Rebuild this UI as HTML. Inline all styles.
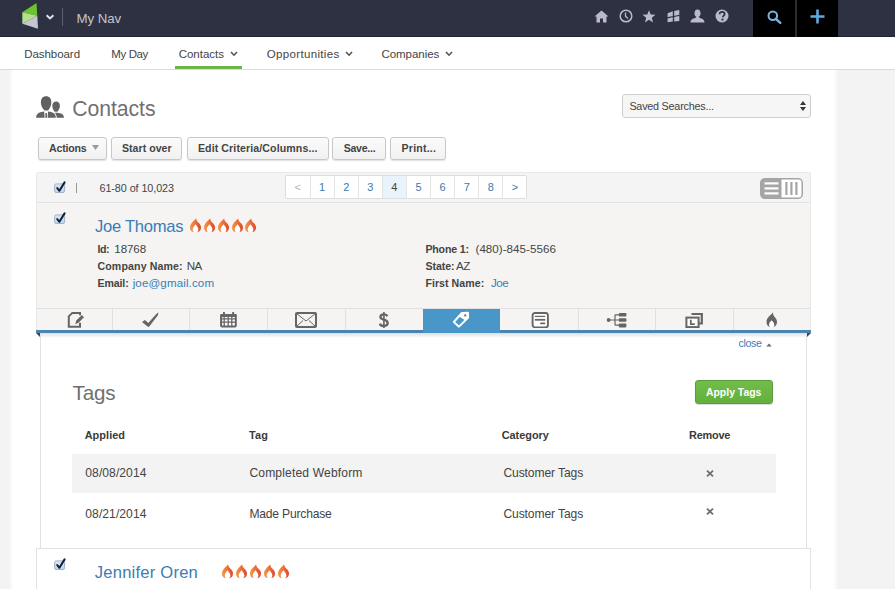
<!DOCTYPE html>
<html><head><meta charset="utf-8">
<style>
*{box-sizing:border-box;margin:0;padding:0}
html,body{width:895px;height:589px;overflow:hidden;background:#f3f3f3;font-family:"Liberation Sans",sans-serif;color:#444}
.abs{position:absolute}
#top{position:absolute;left:0;top:0;width:895px;height:37px;background:#2e3142;border-bottom:1px solid #242633}
#nav2{position:absolute;left:0;top:37px;width:895px;height:33px;background:#fff;border-bottom:1px solid #dcdcdc}
.tab2{position:absolute;top:11px;font-size:13px;color:#444;white-space:nowrap}
.chev{display:inline-block;width:5px;height:5px;border-right:1.5px solid #555;border-bottom:1.5px solid #555;transform:rotate(45deg);margin-left:7px;position:relative;top:-3px}
#main{position:absolute;left:10px;top:70px;width:828px;height:519px;background:#fff}
.btn{position:absolute;top:137px;height:23px;border:1px solid #c8c8c8;border-radius:3px;background:linear-gradient(#fbfbfb,#f1f1f1);box-shadow:0 1px 1px rgba(0,0,0,.12);font-size:11px;font-weight:bold;color:#444;text-align:center;line-height:21px;white-space:nowrap}
.txt{position:absolute;white-space:nowrap}
</style></head><body>
<div id="top">
  <svg class="abs" style="left:0;top:0" width="45" height="36" viewBox="0 0 45 36">
    <polygon points="22.3,12.2 36.5,3 37.3,15.8" fill="#6ac42e"/>
    <polygon points="22.3,12.2 37.3,15.8 22.3,23.8" fill="#b3e08e"/>
    <polygon points="22.3,23.8 37.3,15.8 38,28.7" fill="#c6c6ce"/>
  </svg>
  <svg class="abs" style="left:44px;top:12px" width="12" height="9" viewBox="0 0 12 9"><path d="M2.6 3.2 L6 6.4 L9.4 3.2" fill="none" stroke="#e4e5ea" stroke-width="1.9"/></svg>
  <div class="abs" style="left:62px;top:8px;width:1px;height:18px;background:#5a5d6c"></div>
</div>
<div id="nav2">
  <div class="abs" style="left:175px;top:29px;width:67px;height:3px;background:#6cb44a"></div>
</div>
<div id="main"></div><div class="abs" style="left:833px;top:70px;width:5px;height:519px;background:linear-gradient(to right,rgba(0,0,0,0),rgba(0,0,0,.045))"></div><div class="abs" style="left:10px;top:70px;width:3px;height:519px;background:linear-gradient(to left,rgba(0,0,0,0),rgba(0,0,0,.04))"></div>
<!-- Heading -->
<!-- Select -->
<div class="abs" style="left:622px;top:94px;width:189px;height:24px;border:1px solid #cfcfcf;border-radius:3px;background:#f6f6f6"></div>
<!-- buttons -->
<div class="btn" style="left:38px;width:69px"></div>
<div class="btn" style="left:111px;width:71px"></div>
<div class="btn" style="left:187px;width:142px"></div>
<div class="btn" style="left:332px;width:54px"></div>
<div class="btn" style="left:390px;width:56px"></div>

<!-- list container -->
<div class="abs" style="left:36px;top:172px;width:775px;height:161px;border:1px solid #e9e9e9;border-bottom:none;border-radius:3px 3px 0 0;background:#f5f4f2"></div>
<div class="abs" style="left:37px;top:173px;width:773px;height:30px;background:#f4f4f4;border-bottom:1px solid #e3e3e3;border-radius:3px 3px 0 0"></div>
<svg class="abs" style="left:53px;top:180px" width="14" height="14" viewBox="0 0 14 14"><defs><linearGradient id="cbg" x1="0" y1="0" x2="0" y2="1"><stop offset="0" stop-color="#dbe6f3"/><stop offset="1" stop-color="#bcd8ef"/></linearGradient></defs><rect x="1.6" y="3.9" width="10" height="8.6" rx="1.6" fill="url(#cbg)" stroke="#a3b3c6"/><path d="M4.2 8 L6.4 10.8 L11.6 2.4" fill="none" stroke="#131f3d" stroke-width="2" stroke-linecap="round" stroke-linejoin="round"/></svg>
<div class="abs" style="left:76px;top:183px;width:1px;height:10px;background:#999"></div>
<div class="abs" style="left:285px;top:175px;height:24px;border:1px solid #ddd;border-radius:2px;background:#fff;display:flex">
<div style="width:23.6px;height:22px;background:#fff;color:#b5b5b5;font-size:11px;text-align:center;line-height:22px">&lt;</div><div style="width:24.1px;height:22px;border-left:1px solid #e4e4e4;background:#fff;color:#4179ab;font-size:11px;text-align:center;line-height:22px">1</div><div style="width:24.1px;height:22px;border-left:1px solid #e4e4e4;background:#fff;color:#4179ab;font-size:11px;text-align:center;line-height:22px">2</div><div style="width:24.1px;height:22px;border-left:1px solid #e4e4e4;background:#fff;color:#4179ab;font-size:11px;text-align:center;line-height:22px">3</div><div style="width:24.1px;height:22px;border-left:1px solid #e4e4e4;background:#e9f3fb;color:#444;font-size:11px;text-align:center;line-height:22px">4</div><div style="width:24.1px;height:22px;border-left:1px solid #e4e4e4;background:#fff;color:#4179ab;font-size:11px;text-align:center;line-height:22px">5</div><div style="width:24.1px;height:22px;border-left:1px solid #e4e4e4;background:#fff;color:#4179ab;font-size:11px;text-align:center;line-height:22px">6</div><div style="width:24.1px;height:22px;border-left:1px solid #e4e4e4;background:#fff;color:#4179ab;font-size:11px;text-align:center;line-height:22px">7</div><div style="width:24.1px;height:22px;border-left:1px solid #e4e4e4;background:#fff;color:#4179ab;font-size:11px;text-align:center;line-height:22px">8</div><div style="width:24.1px;height:22px;border-left:1px solid #e4e4e4;background:#fff;color:#4179ab;font-size:11px;text-align:center;line-height:22px">&gt;</div>
</div>
<svg class="abs" style="left:759.5px;top:177.5px" width="43" height="21" viewBox="0 0 43 21"><rect x="0.75" y="0.75" width="41.5" height="19.5" rx="4" fill="#fff" stroke="#a5a5a5" stroke-width="1.5"/><path d="M4.75 0.75 H21.5 V20.25 H4.75 A4 4 0 0 1 0.75 16.25 V4.75 A4 4 0 0 1 4.75 0.75Z" fill="#a5a5a5"/><rect x="4.5" y="4.3" width="14" height="2.2" fill="#fff"/><rect x="4.5" y="9.3" width="14" height="2.2" fill="#fff"/><rect x="4.5" y="14.3" width="14" height="2.2" fill="#fff"/><rect x="25.3" y="4" width="2.2" height="13" fill="#a5a5a5"/><rect x="30.3" y="4" width="2.2" height="13" fill="#a5a5a5"/><rect x="35.3" y="4" width="2.2" height="13" fill="#a5a5a5"/></svg>
<!-- card -->
<svg class="abs" style="left:53px;top:211px" width="14" height="14" viewBox="0 0 14 14"><defs><linearGradient id="cbg" x1="0" y1="0" x2="0" y2="1"><stop offset="0" stop-color="#dbe6f3"/><stop offset="1" stop-color="#bcd8ef"/></linearGradient></defs><rect x="1.6" y="3.9" width="10" height="8.6" rx="1.6" fill="url(#cbg)" stroke="#a3b3c6"/><path d="M4.2 8 L6.4 10.8 L11.6 2.4" fill="none" stroke="#131f3d" stroke-width="2" stroke-linecap="round" stroke-linejoin="round"/></svg>
<svg class="abs" style="left:189.8px;top:217.8px" width="12" height="15" viewBox="0 0 12 15"><defs><linearGradient id="fga0" x1="0" y1="0" x2="1" y2="0"><stop offset="0" stop-color="#f39a4a"/><stop offset="1" stop-color="#e0452a"/></linearGradient></defs><path d="M6.1 0.3 C4.8 2.8 0 4.8 0 9.5 C0 12 1.3 13.6 3 14 L8 14 C9.7 13.6 11 12 11 9.5 C11 6 8 4.8 7 3 C6.5 2.2 6.2 1.2 6.1 0.3Z" fill="url(#fga0)"/><path d="M5.5 6.2 C7.2 8.2 8.3 9.8 8.3 11.6 C8.3 12.9 7.8 13.7 7.3 14 H3.7 C3.2 13.7 2.7 12.9 2.7 11.6 C2.7 9.8 3.8 8.2 5.5 6.2Z" fill="#fff"/></svg><svg class="abs" style="left:203.7px;top:217.8px" width="12" height="15" viewBox="0 0 12 15"><defs><linearGradient id="fga1" x1="0" y1="0" x2="1" y2="0"><stop offset="0" stop-color="#f39a4a"/><stop offset="1" stop-color="#e0452a"/></linearGradient></defs><path d="M6.1 0.3 C4.8 2.8 0 4.8 0 9.5 C0 12 1.3 13.6 3 14 L8 14 C9.7 13.6 11 12 11 9.5 C11 6 8 4.8 7 3 C6.5 2.2 6.2 1.2 6.1 0.3Z" fill="url(#fga1)"/><path d="M5.5 6.2 C7.2 8.2 8.3 9.8 8.3 11.6 C8.3 12.9 7.8 13.7 7.3 14 H3.7 C3.2 13.7 2.7 12.9 2.7 11.6 C2.7 9.8 3.8 8.2 5.5 6.2Z" fill="#fff"/></svg><svg class="abs" style="left:217.6px;top:217.8px" width="12" height="15" viewBox="0 0 12 15"><defs><linearGradient id="fga2" x1="0" y1="0" x2="1" y2="0"><stop offset="0" stop-color="#f39a4a"/><stop offset="1" stop-color="#e0452a"/></linearGradient></defs><path d="M6.1 0.3 C4.8 2.8 0 4.8 0 9.5 C0 12 1.3 13.6 3 14 L8 14 C9.7 13.6 11 12 11 9.5 C11 6 8 4.8 7 3 C6.5 2.2 6.2 1.2 6.1 0.3Z" fill="url(#fga2)"/><path d="M5.5 6.2 C7.2 8.2 8.3 9.8 8.3 11.6 C8.3 12.9 7.8 13.7 7.3 14 H3.7 C3.2 13.7 2.7 12.9 2.7 11.6 C2.7 9.8 3.8 8.2 5.5 6.2Z" fill="#fff"/></svg><svg class="abs" style="left:231.5px;top:217.8px" width="12" height="15" viewBox="0 0 12 15"><defs><linearGradient id="fga3" x1="0" y1="0" x2="1" y2="0"><stop offset="0" stop-color="#f39a4a"/><stop offset="1" stop-color="#e0452a"/></linearGradient></defs><path d="M6.1 0.3 C4.8 2.8 0 4.8 0 9.5 C0 12 1.3 13.6 3 14 L8 14 C9.7 13.6 11 12 11 9.5 C11 6 8 4.8 7 3 C6.5 2.2 6.2 1.2 6.1 0.3Z" fill="url(#fga3)"/><path d="M5.5 6.2 C7.2 8.2 8.3 9.8 8.3 11.6 C8.3 12.9 7.8 13.7 7.3 14 H3.7 C3.2 13.7 2.7 12.9 2.7 11.6 C2.7 9.8 3.8 8.2 5.5 6.2Z" fill="#fff"/></svg><svg class="abs" style="left:245.4px;top:217.8px" width="12" height="15" viewBox="0 0 12 15"><defs><linearGradient id="fga4" x1="0" y1="0" x2="1" y2="0"><stop offset="0" stop-color="#f39a4a"/><stop offset="1" stop-color="#e0452a"/></linearGradient></defs><path d="M6.1 0.3 C4.8 2.8 0 4.8 0 9.5 C0 12 1.3 13.6 3 14 L8 14 C9.7 13.6 11 12 11 9.5 C11 6 8 4.8 7 3 C6.5 2.2 6.2 1.2 6.1 0.3Z" fill="url(#fga4)"/><path d="M5.5 6.2 C7.2 8.2 8.3 9.8 8.3 11.6 C8.3 12.9 7.8 13.7 7.3 14 H3.7 C3.2 13.7 2.7 12.9 2.7 11.6 C2.7 9.8 3.8 8.2 5.5 6.2Z" fill="#fff"/></svg>
<!-- tabs -->
<div class="abs" style="left:37px;top:308px;width:773px;height:1px;background:#e0e0e0"></div>
<div class="abs" style="left:112px;top:309px;width:1px;height:21px;background:#e0e0e0"></div><div class="abs" style="left:189px;top:309px;width:1px;height:21px;background:#e0e0e0"></div><div class="abs" style="left:267px;top:309px;width:1px;height:21px;background:#e0e0e0"></div><div class="abs" style="left:345px;top:309px;width:1px;height:21px;background:#e0e0e0"></div><div class="abs" style="left:578px;top:309px;width:1px;height:21px;background:#e0e0e0"></div><div class="abs" style="left:655px;top:309px;width:1px;height:21px;background:#e0e0e0"></div><div class="abs" style="left:733px;top:309px;width:1px;height:21px;background:#e0e0e0"></div><div class="abs" style="left:423px;top:309px;width:77px;height:21px;background:#4996c9"></div><svg class="abs" style="left:60px;top:308px" width="35" height="24" viewBox="0 0 35 24"><path d="M20 14.8 V18.8 H8.8 V8.3 L12.3 4.9 H20 V7.2" fill="none" stroke="#656565" stroke-width="2"/><path d="M15.3 16.2 L16.3 12.6 L21.8 7.1 L24 9.3 L18.5 14.8Z" fill="#656565"/></svg><svg class="abs" style="left:120px;top:305px" width="40" height="25" viewBox="0 0 40 25"><path d="M22 17 L24.9 14.9 L28.3 18.1 L35.8 9.5 L38.4 7.3 L37.9 10.3 L29.3 21.6 L28.2 22.1 Z" fill="#656565"/></svg><svg class="abs" style="left:212px;top:308px" width="35" height="24" viewBox="0 0 35 24"><rect x="9.1" y="6.9" width="14.7" height="11.5" rx="1" fill="#fff" stroke="#656565" stroke-width="2"/><rect x="8.5" y="6" width="16" height="3" fill="#656565"/><rect x="11" y="4" width="1.9" height="3" fill="#656565"/><rect x="20.2" y="4" width="1.9" height="3" fill="#656565"/><path d="M12.2 9 V18.5 M16.2 9 V18.5 M19.8 9 V18.5 M9 10.8 H24 M9 14.2 H24" stroke="#656565" stroke-width="1.3"/></svg><svg class="abs" style="left:295px;top:312px" width="22" height="16" viewBox="0 0 22 16"><rect x="1" y="1" width="20" height="14" rx="1" fill="none" stroke="#656565" stroke-width="2"/><path d="M1.5 1.5 L11 9 L20.5 1.5 M1.5 14.5 L8 8.5 M20.5 14.5 L14 8.5" fill="none" stroke="#656565" stroke-width="1"/></svg><svg class="abs" style="left:445px;top:308px" width="35" height="24" viewBox="0 0 35 24"><path d="M16.8 5 L23 4.8 L23.2 9.5 L14 18.7 L8.8 14 Z" fill="none" stroke="#fff" stroke-width="1.9" stroke-linejoin="round"/><path d="M16.8 5 L23 4.8 L23.2 9.5 L20.3 12.4 L13.9 8.3Z" fill="#fff"/><circle cx="20.2" cy="7.4" r="1.15" fill="#3f7fae"/></svg><svg class="abs" style="left:531px;top:312px" width="18" height="16" viewBox="0 0 18 16"><rect x="1.6" y="1" width="15.3" height="14.4" rx="2.4" fill="#fff" stroke="#656565" stroke-width="1.9"/><path d="M3.8 4.4 H14.2" stroke="#656565" stroke-width="1.3"/><path d="M3.8 7.8 H14.2" stroke="#656565" stroke-width="1.8"/><rect x="9.2" y="10.5" width="5" height="1.8" rx="0.6" fill="#656565"/></svg><svg class="abs" style="left:606px;top:312px" width="22" height="16" viewBox="0 0 22 16"><circle cx="2.6" cy="8" r="1.9" fill="#656565"/><path d="M3 8 H13 M9 2.8 V13.2 M9 2.8 H13 M9 13.2 H13" stroke="#656565" stroke-width="1.2" fill="none"/><rect x="12.8" y="1" width="7.6" height="3.6" rx="0.8" fill="#656565"/><rect x="12.8" y="6.2" width="7.6" height="3.6" rx="0.8" fill="#656565"/><rect x="12.8" y="11.6" width="7.6" height="3.8" rx="0.8" fill="#656565"/></svg><svg class="abs" style="left:685px;top:312px" width="18" height="16" viewBox="0 0 18 16"><path d="M6.5 2 H16.8 V11.5 H14" fill="none" stroke="#656565" stroke-width="2.2"/><rect x="1.4" y="5.6" width="12.2" height="9.5" fill="#fff" stroke="#656565" stroke-width="2"/><path d="M5.8 7.8 V12.2 H9.8" fill="none" stroke="#656565" stroke-width="1.7"/></svg><svg class="abs" style="left:766px;top:312px" width="12" height="16" viewBox="0 0 12 16"><path d="M7 0.3 C5.5 3 0.5 5 0.5 10 C0.5 12.6 1.8 14.5 3.6 15 L7.6 15 C9.6 14.5 11 12.6 11 10 C11 6.5 8.4 5.2 7.6 3.5 C7.2 2.6 7 1.5 7 0.3Z" fill="#656565"/><path d="M5.6 8.3 C7.2 10 8.3 11.3 8.3 12.8 C8.3 14 7.8 14.7 7.3 15 H4 C3.5 14.7 3 14 3 12.8 C3 11.3 4 10 5.6 8.3Z" fill="#fff"/></svg><svg class="abs" style="left:370px;top:308px" width="30" height="24" viewBox="0 0 30 24"><path d="M17.3 8.2 C16.8 7 15.7 6.3 13.9 6.3 C11.6 6.3 10.4 7.4 10.4 9 C10.4 12.5 17.7 10.9 17.7 15.1 C17.7 16.9 16.2 18 13.8 18 C11.7 18 10.3 17.1 9.9 15.6" fill="none" stroke="#656565" stroke-width="2.3"/><path d="M13.9 4 V20" stroke="#656565" stroke-width="1.6"/></svg>
<div class="abs" style="left:36px;top:330px;width:775px;height:3px;background:#4a85b2"></div><div class="abs" style="left:423px;top:330px;width:77px;height:3px;background:#4996c9"></div>
<div class="abs" style="left:41px;top:333px;width:765px;height:5px;background:linear-gradient(rgba(0,0,0,.13),rgba(0,0,0,0))"></div>
<svg class="abs" style="left:36px;top:333px" width="5" height="4"><polygon points="0,0 5,0 4,4" fill="#2a4a66"/></svg>
<svg class="abs" style="left:806px;top:333px" width="5" height="4"><polygon points="0,0 5,0 1,4" fill="#2a4a66"/></svg>
<!-- panel -->
<div class="abs" style="left:40px;top:333px;width:767px;height:216px;border-left:1px solid #e2e2e2;border-right:1px solid #e2e2e2"></div>
<div class="abs" style="left:695px;top:380px;width:78px;height:24px;border:1px solid #5a9c3c;border-radius:3px;background:linear-gradient(#70bd48,#63b03f);box-shadow:0 1px 1px rgba(0,0,0,.15);"></div>
<div class="abs" style="left:72px;top:454px;width:704px;height:39px;background:#f3f3f3"></div>
<svg class="abs" style="left:705px;top:469px" width="10" height="9" viewBox="0 0 10 9"><path d="M2 1.6 L8 7.4 M8 1.6 L2 7.4" stroke="#6e6e6e" stroke-width="1.8"/></svg>
<svg class="abs" style="left:705px;top:506.5px" width="10" height="9" viewBox="0 0 10 9"><path d="M2 1.6 L8 7.4 M8 1.6 L2 7.4" stroke="#6e6e6e" stroke-width="1.8"/></svg>
<!-- jennifer -->
<div class="abs" style="left:36px;top:548px;width:775px;height:50px;border:1px solid #e2e2e2;background:#fff"></div>
<svg class="abs" style="left:53px;top:557px" width="14" height="14" viewBox="0 0 14 14"><defs><linearGradient id="cbg" x1="0" y1="0" x2="0" y2="1"><stop offset="0" stop-color="#dbe6f3"/><stop offset="1" stop-color="#bcd8ef"/></linearGradient></defs><rect x="1.6" y="3.9" width="10" height="8.6" rx="1.6" fill="url(#cbg)" stroke="#a3b3c6"/><path d="M4.2 8 L6.4 10.8 L11.6 2.4" fill="none" stroke="#131f3d" stroke-width="2" stroke-linecap="round" stroke-linejoin="round"/></svg>
<svg class="abs" style="left:222.4px;top:564.3px" width="12" height="15" viewBox="0 0 12 15"><defs><linearGradient id="fgb0" x1="0" y1="0" x2="1" y2="0"><stop offset="0" stop-color="#f39a4a"/><stop offset="1" stop-color="#e0452a"/></linearGradient></defs><path d="M6.1 0.3 C4.8 2.8 0 4.8 0 9.5 C0 12 1.3 13.6 3 14 L8 14 C9.7 13.6 11 12 11 9.5 C11 6 8 4.8 7 3 C6.5 2.2 6.2 1.2 6.1 0.3Z" fill="url(#fgb0)"/><path d="M5.5 6.2 C7.2 8.2 8.3 9.8 8.3 11.6 C8.3 12.9 7.8 13.7 7.3 14 H3.7 C3.2 13.7 2.7 12.9 2.7 11.6 C2.7 9.8 3.8 8.2 5.5 6.2Z" fill="#fff"/></svg><svg class="abs" style="left:236.3px;top:564.3px" width="12" height="15" viewBox="0 0 12 15"><defs><linearGradient id="fgb1" x1="0" y1="0" x2="1" y2="0"><stop offset="0" stop-color="#f39a4a"/><stop offset="1" stop-color="#e0452a"/></linearGradient></defs><path d="M6.1 0.3 C4.8 2.8 0 4.8 0 9.5 C0 12 1.3 13.6 3 14 L8 14 C9.7 13.6 11 12 11 9.5 C11 6 8 4.8 7 3 C6.5 2.2 6.2 1.2 6.1 0.3Z" fill="url(#fgb1)"/><path d="M5.5 6.2 C7.2 8.2 8.3 9.8 8.3 11.6 C8.3 12.9 7.8 13.7 7.3 14 H3.7 C3.2 13.7 2.7 12.9 2.7 11.6 C2.7 9.8 3.8 8.2 5.5 6.2Z" fill="#fff"/></svg><svg class="abs" style="left:250.2px;top:564.3px" width="12" height="15" viewBox="0 0 12 15"><defs><linearGradient id="fgb2" x1="0" y1="0" x2="1" y2="0"><stop offset="0" stop-color="#f39a4a"/><stop offset="1" stop-color="#e0452a"/></linearGradient></defs><path d="M6.1 0.3 C4.8 2.8 0 4.8 0 9.5 C0 12 1.3 13.6 3 14 L8 14 C9.7 13.6 11 12 11 9.5 C11 6 8 4.8 7 3 C6.5 2.2 6.2 1.2 6.1 0.3Z" fill="url(#fgb2)"/><path d="M5.5 6.2 C7.2 8.2 8.3 9.8 8.3 11.6 C8.3 12.9 7.8 13.7 7.3 14 H3.7 C3.2 13.7 2.7 12.9 2.7 11.6 C2.7 9.8 3.8 8.2 5.5 6.2Z" fill="#fff"/></svg><svg class="abs" style="left:264.1px;top:564.3px" width="12" height="15" viewBox="0 0 12 15"><defs><linearGradient id="fgb3" x1="0" y1="0" x2="1" y2="0"><stop offset="0" stop-color="#f39a4a"/><stop offset="1" stop-color="#e0452a"/></linearGradient></defs><path d="M6.1 0.3 C4.8 2.8 0 4.8 0 9.5 C0 12 1.3 13.6 3 14 L8 14 C9.7 13.6 11 12 11 9.5 C11 6 8 4.8 7 3 C6.5 2.2 6.2 1.2 6.1 0.3Z" fill="url(#fgb3)"/><path d="M5.5 6.2 C7.2 8.2 8.3 9.8 8.3 11.6 C8.3 12.9 7.8 13.7 7.3 14 H3.7 C3.2 13.7 2.7 12.9 2.7 11.6 C2.7 9.8 3.8 8.2 5.5 6.2Z" fill="#fff"/></svg><svg class="abs" style="left:278.0px;top:564.3px" width="12" height="15" viewBox="0 0 12 15"><defs><linearGradient id="fgb4" x1="0" y1="0" x2="1" y2="0"><stop offset="0" stop-color="#f39a4a"/><stop offset="1" stop-color="#e0452a"/></linearGradient></defs><path d="M6.1 0.3 C4.8 2.8 0 4.8 0 9.5 C0 12 1.3 13.6 3 14 L8 14 C9.7 13.6 11 12 11 9.5 C11 6 8 4.8 7 3 C6.5 2.2 6.2 1.2 6.1 0.3Z" fill="url(#fgb4)"/><path d="M5.5 6.2 C7.2 8.2 8.3 9.8 8.3 11.6 C8.3 12.9 7.8 13.7 7.3 14 H3.7 C3.2 13.7 2.7 12.9 2.7 11.6 C2.7 9.8 3.8 8.2 5.5 6.2Z" fill="#fff"/></svg>

<!-- top right icons -->
<svg class="abs" style="left:594px;top:10px" width="15" height="13" viewBox="0 0 15 13"><path d="M7.5 0.5 L14.5 6.5 L12.5 6.5 L12.5 12.5 L9 12.5 L9 8.5 L6 8.5 L6 12.5 L2.5 12.5 L2.5 6.5 L0.5 6.5Z" fill="#b9bcc8"/></svg>
<svg class="abs" style="left:619px;top:9px" width="14" height="14" viewBox="0 0 14 14"><circle cx="7" cy="7" r="5.8" fill="none" stroke="#b9bcc8" stroke-width="1.5"/><path d="M6.5 3.5 V7.3 L9 9.5" fill="none" stroke="#b9bcc8" stroke-width="1.3"/></svg>
<svg class="abs" style="left:642px;top:10px" width="14" height="13" viewBox="0 0 14 13"><path d="M7 0.3 L8.7 4.6 L13.5 4.8 L9.8 7.8 L11 12.5 L7 9.8 L3 12.5 L4.2 7.8 L0.5 4.8 L5.3 4.6Z" fill="#b9bcc8"/></svg>
<svg class="abs" style="left:662px;top:6px" width="24" height="20" viewBox="0 0 24 20"><path d="M5.6 7.3 L10.8 5.3 L10.8 15.5 L5.6 16.2Z M12.2 4.9 L17.3 4.1 L17.3 15.1 L12.2 15.6Z" fill="#b9bcc8"/><path d="M5 11.9 L18 9.3" stroke="#2e3142" stroke-width="1.1"/></svg>
<svg class="abs" style="left:690px;top:9px" width="15" height="14" viewBox="0 0 15 14"><ellipse cx="7.5" cy="4.2" rx="3" ry="3.8" fill="#b9bcc8"/><path d="M6 7.5 L9 7.5 L9.5 9 C12 9.5 14.5 10.5 14.5 13.5 L0.5 13.5 C0.5 10.5 3 9.5 5.5 9Z" fill="#b9bcc8"/></svg>
<svg class="abs" style="left:715px;top:9px" width="14" height="14" viewBox="0 0 14 14"><circle cx="7" cy="7" r="6.5" fill="#b9bcc8"/><path d="M4.6 5.2 C4.6 3.6 5.7 2.8 7.1 2.8 C8.6 2.8 9.6 3.7 9.6 5 C9.6 6.5 7.8 6.8 7.8 8.3" fill="none" stroke="#2e3142" stroke-width="1.8"/><rect x="6.5" y="9.6" width="2" height="1.9" fill="#2e3142"/></svg>
<div class="abs" style="left:753px;top:0;width:42px;height:37px;background:#000"></div>
<div class="abs" style="left:795px;top:0;width:2px;height:37px;background:#2b2b30"></div>
<div class="abs" style="left:797px;top:0;width:41px;height:37px;background:#000"></div>
<svg class="abs" style="left:767px;top:10px" width="15" height="14" viewBox="0 0 15 14"><circle cx="5.8" cy="5.8" r="4.3" fill="none" stroke="#7cb6dd" stroke-width="2"/><path d="M8.8 8.8 L13.3 12.8" stroke="#7cb6dd" stroke-width="2.4" stroke-linecap="round"/></svg>
<svg class="abs" style="left:810px;top:9px" width="15" height="15" viewBox="0 0 15 15"><path d="M7.5 0.5 V14.5 M0.5 7.5 H14.5" stroke="#5ea9df" stroke-width="2.6"/></svg>
<!-- contacts icon -->
<svg class="abs" style="left:36px;top:96px" width="29" height="23" viewBox="0 0 29 23"><path d="M10.1 0.3 C13.5 0.3 15.3 2.5 15.3 6.5 C15.3 10 13.5 13 12 14.5 L8.5 14.5 C6.8 13 4.9 10 4.9 6.5 C4.9 2.5 6.7 0.3 10.1 0.3Z" fill="#606060"/><path d="M0.1 21.8 C0.5 17.5 2.5 16.5 6.5 15.8 L8.2 15.4 L8.6 21.8Z" fill="#626262"/><path d="M12 15.4 L13.8 15.8 C17.5 16.5 19.5 17.5 19.9 21.8 L11.6 21.8Z" fill="#626262"/><path d="M9.4 17 H10.9 L11 21.8 H9.3Z" fill="#626262"/><path d="M20.1 5.6 C22.5 5.6 23.9 7.2 23.9 10 C23.9 12.5 22.5 14.5 21.3 15.8 L18.8 15.8 C17.6 14.5 16.3 12.5 16.3 10 C16.3 7.2 17.7 5.6 20.1 5.6Z" fill="#626262"/><path d="M18.5 16.8 L21.5 16.8 C25 17.2 27.8 18 28 21.8 L20.8 21.8 C20.6 19.5 20 18 18.5 16.8Z" fill="#626262"/></svg>
<!-- select arrows -->
<svg class="abs" style="left:800px;top:101px" width="6" height="10" viewBox="0 0 6 10"><path d="M3 0 L6 4 H0Z M0 6 H6 L3 10Z" fill="#333"/></svg>

<!-- chevrons -->
<svg class="abs" style="left:230px;top:51px" width="8" height="6" viewBox="0 0 8 6"><path d="M1 1 L4 4.2 L7 1" fill="none" stroke="#555" stroke-width="1.6"/></svg>
<svg class="abs" style="left:344.5px;top:51px" width="8" height="6" viewBox="0 0 8 6"><path d="M1 1 L4 4.2 L7 1" fill="none" stroke="#555" stroke-width="1.6"/></svg>
<svg class="abs" style="left:444.5px;top:51px" width="8" height="6" viewBox="0 0 8 6"><path d="M1 1 L4 4.2 L7 1" fill="none" stroke="#555" stroke-width="1.6"/></svg>
<svg class="abs" style="left:92px;top:145px" width="7" height="5" viewBox="0 0 7 5"><path d="M0 0 H7 L3.5 5Z" fill="#999"/></svg>
<svg class="abs" style="left:766px;top:343px" width="6" height="4" viewBox="0 0 6 4"><path d="M0.3 3.6 H5.7 L3 0.4Z" fill="#666"/></svg>
<div class="txt" id="t_mynav" style="left:76.60px;top:10.60px;font-size:13.3px;font-weight:400;letter-spacing:-0.120px;color:#c2c4cc">My Nav</div>
<div class="txt" id="t_dash" style="left:24.20px;top:47.80px;font-size:11.5px;font-weight:400;letter-spacing:-0.050px;color:#444">Dashboard</div>
<div class="txt" id="t_myday" style="left:111.25px;top:47.80px;font-size:11.5px;font-weight:400;letter-spacing:-0.380px;color:#444">My Day</div>
<div class="txt" id="t_ctab" style="left:178.70px;top:47.80px;font-size:11.5px;font-weight:400;letter-spacing:-0.014px;color:#444">Contacts</div>
<div class="txt" id="t_opps" style="left:266.85px;top:47.80px;font-size:11.5px;font-weight:400;letter-spacing:0.325px;color:#444">Opportunities</div>
<div class="txt" id="t_comp" style="left:381.40px;top:47.80px;font-size:11.5px;font-weight:400;letter-spacing:-0.025px;color:#444">Companies</div>
<div class="txt" id="t_head" style="left:72.25px;top:96.50px;font-size:21.2px;font-weight:400;letter-spacing:-0.043px;color:#707070">Contacts</div>
<div class="txt" id="t_saved" style="left:629.40px;top:99.80px;font-size:10.8px;font-weight:400;letter-spacing:-0.231px;color:#444">Saved Searches...</div>
<div class="txt" id="t_b1" style="left:49.10px;top:141.80px;font-size:10.6px;font-weight:700;letter-spacing:-0.200px;color:#444">Actions</div>
<div class="txt" id="t_b2" style="left:122.00px;top:141.80px;font-size:10.6px;font-weight:700;letter-spacing:0.011px;color:#444">Start over</div>
<div class="txt" id="t_b3" style="left:197.90px;top:141.80px;font-size:10.6px;font-weight:700;letter-spacing:0.104px;color:#444">Edit Criteria/Columns...</div>
<div class="txt" id="t_b4" style="left:343.70px;top:141.80px;font-size:10.6px;font-weight:700;letter-spacing:-0.267px;color:#444">Save...</div>
<div class="txt" id="t_b5" style="left:401.60px;top:141.80px;font-size:10.6px;font-weight:700;letter-spacing:0.200px;color:#444">Print...</div>
<div class="txt" id="t_count" style="left:99.50px;top:181.50px;font-size:10.8px;font-weight:400;letter-spacing:-0.079px;color:#444">61-80 of 10,023</div>
<div class="txt" id="t_joe" style="left:95.00px;top:216.70px;font-size:16.6px;font-weight:400;letter-spacing:-0.267px;color:#3a7db4">Joe Thomas</div>
<div class="txt" id="t_idl" style="left:97.50px;top:242.90px;font-size:10.6px;font-weight:700;letter-spacing:-0.500px;color:#444">Id:</div>
<div class="txt" id="t_idv" style="left:114.30px;top:241.90px;font-size:11.6px;font-weight:400;letter-spacing:-0.100px;color:#444">18768</div>
<div class="txt" id="t_cnl" style="left:97.50px;top:260.20px;font-size:10.6px;font-weight:700;letter-spacing:0.125px;color:#444">Company Name:</div>
<div class="txt" id="t_cnv" style="left:186.65px;top:259.20px;font-size:11.6px;font-weight:400;letter-spacing:-0.500px;color:#444">NA</div>
<div class="txt" id="t_eml" style="left:97.50px;top:277.30px;font-size:10.6px;font-weight:700;letter-spacing:-0.120px;color:#444">Email:</div>
<div class="txt" id="t_emv" style="left:132.70px;top:276.30px;font-size:11.6px;font-weight:400;letter-spacing:0.108px;color:#3a7db4">joe@gmail.com</div>
<div class="txt" id="t_phl" style="left:425.40px;top:242.90px;font-size:10.6px;font-weight:700;letter-spacing:-0.157px;color:#444">Phone 1:</div>
<div class="txt" id="t_phv" style="left:475.50px;top:241.90px;font-size:11.6px;font-weight:400;letter-spacing:0.031px;color:#444">(480)-845-5566</div>
<div class="txt" id="t_stl" style="left:425.40px;top:260.20px;font-size:10.6px;font-weight:700;letter-spacing:-0.040px;color:#444">State:</div>
<div class="txt" id="t_stv" style="left:455.95px;top:259.20px;font-size:11.6px;font-weight:400;letter-spacing:-0.500px;color:#444">AZ</div>
<div class="txt" id="t_fnl" style="left:425.40px;top:277.30px;font-size:10.6px;font-weight:700;letter-spacing:0.050px;color:#444">First Name:</div>
<div class="txt" id="t_fnv" style="left:490.90px;top:276.30px;font-size:11.6px;font-weight:400;letter-spacing:-0.500px;color:#3a7db4">Joe</div>
<div class="txt" id="t_close" style="left:738.55px;top:337.40px;font-size:10.6px;font-weight:400;letter-spacing:-0.375px;color:#3a7db5">close</div>
<div class="txt" id="t_tags" style="left:72.45px;top:380.90px;font-size:20.6px;font-weight:400;letter-spacing:-0.100px;color:#707070">Tags</div>
<div class="txt" id="t_apply" style="left:706.00px;top:386.50px;font-size:10.4px;font-weight:700;letter-spacing:0.011px;color:#fff">Apply Tags</div>
<div class="txt" id="t_hap" style="left:84.70px;top:428.60px;font-size:10.9px;font-weight:700;letter-spacing:0.067px;color:#3a3a3a">Applied</div>
<div class="txt" id="t_htag" style="left:248.90px;top:428.60px;font-size:10.9px;font-weight:700;letter-spacing:0.200px;color:#3a3a3a">Tag</div>
<div class="txt" id="t_hcat" style="left:501.70px;top:428.60px;font-size:10.9px;font-weight:700;letter-spacing:0.000px;color:#3a3a3a">Category</div>
<div class="txt" id="t_hrem" style="left:689.00px;top:428.60px;font-size:10.9px;font-weight:700;letter-spacing:-0.200px;color:#3a3a3a">Remove</div>
<div class="txt" id="t_r1a" style="left:85.30px;top:465.90px;font-size:12.1px;font-weight:400;letter-spacing:0.067px;color:#444">08/08/2014</div>
<div class="txt" id="t_r1b" style="left:249.40px;top:465.90px;font-size:12.1px;font-weight:400;letter-spacing:0.144px;color:#444">Completed Webform</div>
<div class="txt" id="t_r1c" style="left:503.40px;top:465.90px;font-size:12.1px;font-weight:400;letter-spacing:-0.100px;color:#444">Customer Tags</div>
<div class="txt" id="t_r2a" style="left:85.30px;top:507.00px;font-size:12.1px;font-weight:400;letter-spacing:0.067px;color:#444">08/21/2014</div>
<div class="txt" id="t_r2b" style="left:249.40px;top:507.00px;font-size:12.1px;font-weight:400;letter-spacing:-0.192px;color:#444">Made Purchase</div>
<div class="txt" id="t_r2c" style="left:503.40px;top:507.00px;font-size:12.1px;font-weight:400;letter-spacing:-0.100px;color:#444">Customer Tags</div>
<div class="txt" id="t_jen" style="left:94.80px;top:563.20px;font-size:16.6px;font-weight:400;letter-spacing:0.208px;color:#3a7db4">Jennifer Oren</div>
</body></html>
